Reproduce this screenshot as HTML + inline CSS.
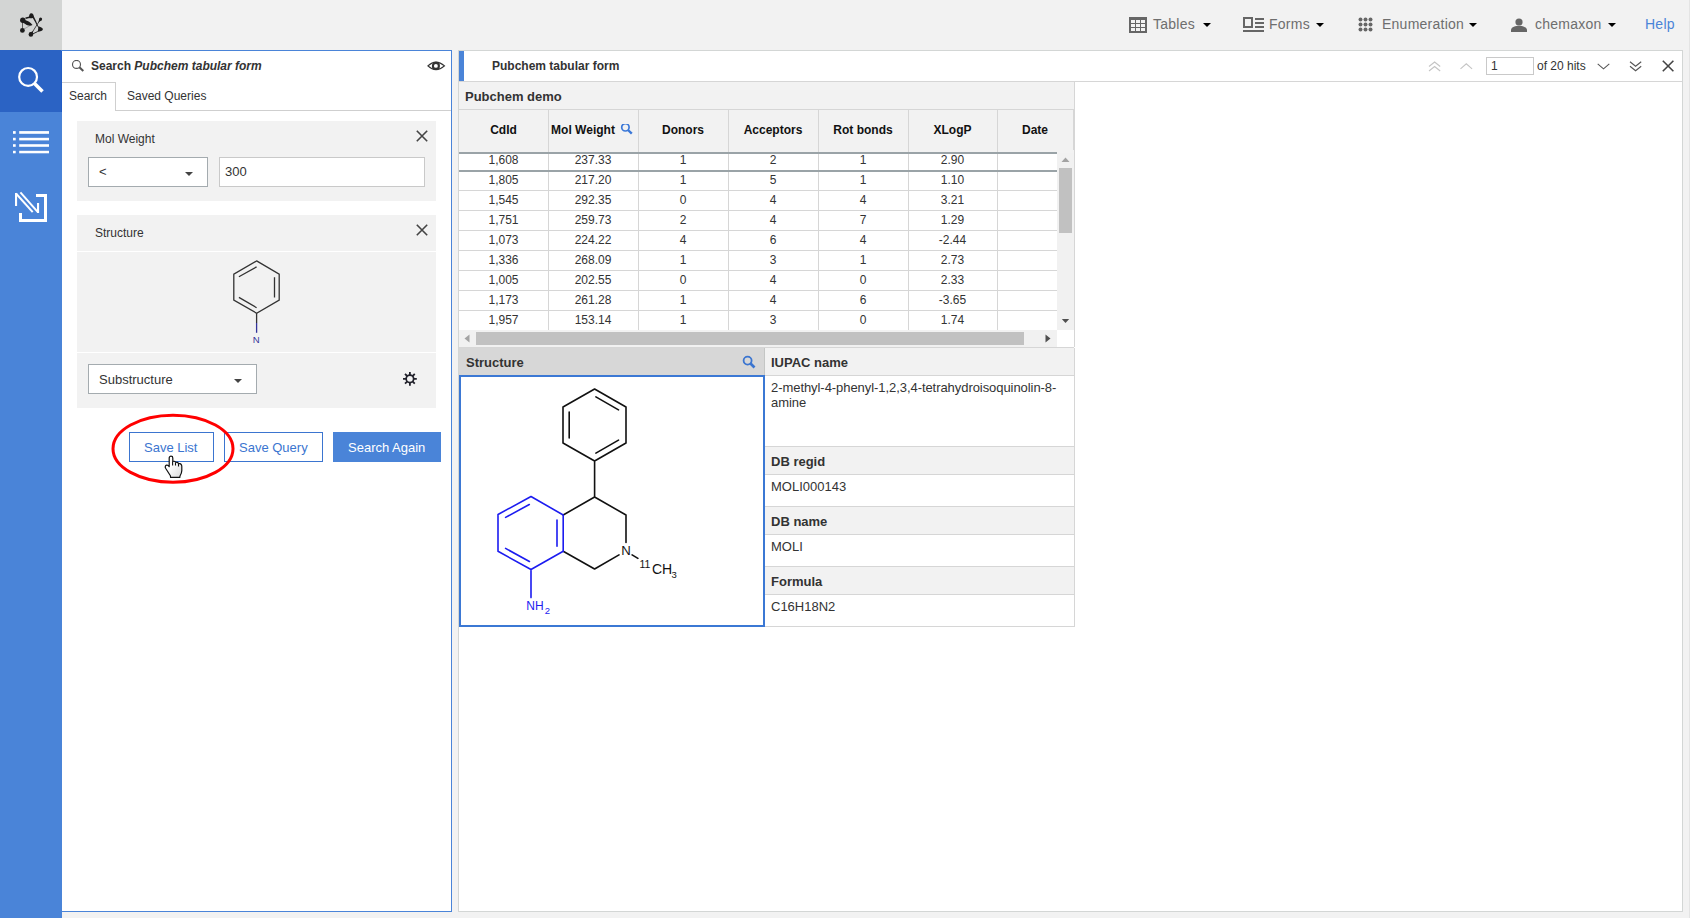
<!DOCTYPE html>
<html><head><meta charset="utf-8">
<style>
*{margin:0;padding:0;box-sizing:border-box}
html,body{width:1690px;height:918px;overflow:hidden;background:#f2f2f2;font-family:"Liberation Sans",sans-serif;color:#333;position:relative}
.a{position:absolute}
.t{position:absolute;white-space:nowrap;line-height:1}
.s12{font-size:12px}.s13{font-size:13px}.s14{font-size:14px;letter-spacing:0.25px}
.b{font-weight:bold}
.hl{position:absolute;height:1px;background:#d3d3d3}
.vl{position:absolute;width:1px;background:#d3d3d3}
</style></head><body>

<!-- logo box -->
<div class="a" style="left:0;top:0;width:62px;height:50px;background:#d3d5d4"></div>
<svg class="a" style="left:18px;top:10px" width="28" height="30" viewBox="18 10 28 30">
 <g fill="#1c1c1c" stroke="none">
  <path d="M29 18 C28.8 15.2 29.8 13.2 31.3 13.2 C32.9 13.2 34 15.2 34.1 17.5 C33 18.3 30.6 18.5 29 18Z"/>
  <path d="M32.2 17 L34.1 17 C35.6 20 37 23.2 38.3 26.4 L37.6 26.7 C36 23.2 34 20 32.2 17Z"/>
  <path d="M25.3 17.5 L29.3 16.6 L29.6 18.1 L25.7 19.1Z"/>
  <ellipse cx="22.8" cy="20.3" rx="2.7" ry="2.7"/>
  <path d="M24.8 19.9 C27.8 20.4 30.8 22.5 32.5 25.1 C30 26.3 27.2 25.4 25.2 23.9 C24.4 23.3 23.6 22.9 22.8 22.7Z"/>
  <rect x="22.1" y="22.5" width="0.8" height="6" opacity="0.8"/>
  <circle cx="22.4" cy="30.4" r="2.4"/>
  <path d="M29.5 33 L33.3 30.8 L32.6 34.6Z"/>
  <circle cx="30.9" cy="34.4" r="2.3"/>
  <path d="M39.3 18.8 L41.8 20 L38.2 22.8Z"/>
  <circle cx="40.6" cy="19.1" r="1.55"/>
  <path d="M38 26.2 C40.5 26.8 42.9 27.6 42.9 29.3 C42.9 30.9 40.3 31.6 37.4 31.9 C38.3 30 38.4 28 38 26.2Z"/>
 </g>
 <g stroke="#1c1c1c" fill="none">
  <path d="M23.6 29.3 L30 25.6" stroke-width="0.6" opacity="0.45"/>
  <path d="M32.8 31.4 L39 21.6" stroke-width="0.9" opacity="0.85"/>
  <path d="M33 33.8 L37.6 31.6" stroke-width="0.9"/>
 </g>
</svg>

<!-- sidebar -->
<div class="a" style="left:0;top:50px;width:62px;height:868px;background:#4a84d8"></div>
<div class="a" style="left:0;top:50px;width:62px;height:62px;background:#2b63c4"></div>
<svg class="a" style="left:0;top:50px" width="62" height="62">
 <circle cx="28.1" cy="26.9" r="8.9" fill="none" stroke="#fff" stroke-width="2.2"/>
 <path d="M34 33 L42.5 41.5" stroke="#fff" stroke-width="3.6" stroke-linecap="butt"/>
</svg>
<svg class="a" style="left:0;top:112px" width="62" height="62">
 <g fill="#fff">
  <rect x="13" y="19.1" width="2.7" height="2.7"/><rect x="19.2" y="19.1" width="29.8" height="2.7"/>
  <rect x="13" y="25.8" width="2.7" height="2.6"/><rect x="19.2" y="25.8" width="29.8" height="2.6"/>
  <rect x="13" y="32.2" width="2.7" height="2.6"/><rect x="19.2" y="32.2" width="29.8" height="2.6"/>
  <rect x="13" y="38.8" width="2.7" height="2.5"/><rect x="19.2" y="38.8" width="29.8" height="2.5"/>
 </g>
</svg>
<svg class="a" style="left:0;top:174px" width="62" height="62">
 <g fill="#fff">
  <rect x="15" y="19" width="2.1" height="13"/>
  <rect x="37" y="29" width="2.1" height="10"/>
 </g>
 <g fill="none" stroke="#fff">
  <path d="M16 19.5 L32.7 38.1" stroke-width="2"/>
  <path d="M20.4 18.4 L38.1 38.3" stroke-width="2"/>
  <path d="M36 21.5 H45.5 V46.5 H20.5 V39" stroke-width="3"/>
 </g>
</svg>

<!-- top bar menu -->
<svg class="a" style="left:1129px;top:17px" width="18" height="16">
 <rect x="0" y="0" width="18" height="16" fill="#666"/>
 <g fill="#f2f2f2">
  <rect x="2" y="3" width="4" height="3"/><rect x="7" y="3" width="4" height="3"/><rect x="12" y="3" width="4" height="3"/>
  <rect x="2" y="7" width="4" height="3"/><rect x="7" y="7" width="4" height="3"/><rect x="12" y="7" width="4" height="3"/>
  <rect x="2" y="11" width="4" height="3"/><rect x="7" y="11" width="4" height="3"/><rect x="12" y="11" width="4" height="3"/>
 </g>
</svg>
<div class="t s14" style="left:1153px;top:17px;color:#6e6e6e">Tables</div>
<svg class="a" style="left:1203px;top:23px" width="8" height="4"><path d="M0 0H8L4 4Z" fill="#000"/></svg>

<svg class="a" style="left:1243px;top:17px" width="21" height="16">
 <rect x="1" y="1" width="8" height="9" fill="none" stroke="#666" stroke-width="2"/>
 <rect x="12" y="1" width="9" height="2" fill="#666"/>
 <rect x="12" y="5" width="9" height="2" fill="#666"/>
 <rect x="12" y="9" width="9" height="2" fill="#666"/>
 <rect x="0" y="13" width="21" height="2" fill="#666"/>
</svg>
<div class="t s14" style="left:1269px;top:17px;color:#6e6e6e">Forms</div>
<svg class="a" style="left:1316px;top:23px" width="8" height="4"><path d="M0 0H8L4 4Z" fill="#000"/></svg>

<svg class="a" style="left:1358px;top:17px" width="15" height="15">
 <g fill="#666"><circle cx="2.5" cy="2.5" r="2"/><circle cx="7.5" cy="2.5" r="2"/><circle cx="12.5" cy="2.5" r="2"/>
 <circle cx="2.5" cy="7.5" r="2"/><circle cx="7.5" cy="7.5" r="2"/><circle cx="12.5" cy="7.5" r="2"/>
 <circle cx="2.5" cy="12.5" r="2"/><circle cx="7.5" cy="12.5" r="2"/><circle cx="12.5" cy="12.5" r="2"/></g>
</svg>
<div class="t s14" style="left:1382px;top:17px;color:#6e6e6e">Enumeration</div>
<svg class="a" style="left:1469px;top:23px" width="8" height="4"><path d="M0 0H8L4 4Z" fill="#000"/></svg>

<svg class="a" style="left:1511px;top:18px" width="16" height="14">
 <circle cx="8" cy="4" r="3.6" fill="#666"/>
 <path d="M0 14 V12 C0 9 5 7.8 8 7.8 C11 7.8 16 9 16 12 V14Z" fill="#666"/>
</svg>
<div class="t s14" style="left:1535px;top:17px;color:#6e6e6e">chemaxon</div>
<svg class="a" style="left:1608px;top:23px" width="8" height="4"><path d="M0 0H8L4 4Z" fill="#000"/></svg>
<div class="t s14" style="left:1645px;top:17px;color:#4a84d8">Help</div>

<!-- LEFT PANEL -->
<div class="a" style="left:61px;top:50px;width:391px;height:862px;background:#fff;border:1px solid #4a84d8"></div>

<div class="a" style="left:61px;top:51px;width:1px;height:61px;background:#225dc6"></div>
<!-- left panel header -->
<svg class="a" style="left:71px;top:60px" width="14" height="13">
 <circle cx="5.5" cy="4.4" r="4.0" fill="none" stroke="#555" stroke-width="1.15"/>
 <path d="M8.4 7.3 L12.3 11" stroke="#555" stroke-width="2.1"/>
</svg>
<div class="t s12 b" style="left:91px;top:60px;color:#333">Search <i>Pubchem tabular form</i></div>
<svg class="a" style="left:427px;top:60px" width="19" height="12">
 <path d="M0.9 5.9 Q8.9 -1.6 17.5 5.9 Q8.9 13.4 0.9 5.9Z" fill="none" stroke="#333" stroke-width="1.2"/>
 <circle cx="8.9" cy="5.9" r="3" fill="none" stroke="#333" stroke-width="2.1"/>
</svg>
<!-- tabs -->
<div class="hl" style="left:116px;top:110px;width:335px;background:#cfcfcf"></div>
<div class="hl" style="left:62px;top:82px;width:54px;background:#cfcfcf"></div>
<div class="vl" style="left:115px;top:82px;height:29px;background:#cfcfcf"></div>
<div class="t s12" style="left:69px;top:90px;color:#333">Search</div>
<div class="t s12" style="left:127px;top:90px;color:#333">Saved Queries</div>

<!-- card 1 -->
<div class="a" style="left:77px;top:121px;width:359px;height:80px;background:#f2f2f2"></div>
<div class="t s12" style="left:95px;top:133px;color:#333">Mol Weight</div>
<svg class="a" style="left:416px;top:130px" width="12" height="12"><path d="M0.8 0.8 L11.2 11.2 M11.2 0.8 L0.8 11.2" stroke="#444" stroke-width="1.6"/></svg>
<div class="a" style="left:88px;top:157px;width:120px;height:30px;background:#fff;border:1px solid #a4abaf"></div>
<div class="t s13" style="left:99px;top:165px;color:#333">&lt;</div>
<svg class="a" style="left:185px;top:172px" width="8" height="4"><path d="M0 0H8L4 4Z" fill="#444"/></svg>
<div class="a" style="left:219px;top:157px;width:206px;height:30px;background:#fff;border:1px solid #c9c9c9"></div>
<div class="t s13" style="left:225px;top:165px;color:#333">300</div>

<!-- card 2 -->
<div class="a" style="left:77px;top:215px;width:359px;height:193px;background:#f2f2f2"></div>
<div class="a" style="left:77px;top:251px;width:359px;height:1px;background:#fff"></div>
<div class="a" style="left:77px;top:352px;width:359px;height:1px;background:#fff"></div>
<div class="t s12" style="left:95px;top:227px;color:#333">Structure</div>
<svg class="a" style="left:416px;top:224px" width="12" height="12"><path d="M0.8 0.8 L11.2 11.2 M11.2 0.8 L0.8 11.2" stroke="#444" stroke-width="1.6"/></svg>
<svg class="a" style="left:220px;top:255px" width="80" height="95" viewBox="220 255 80 95">
 <g fill="none" stroke="#333" stroke-width="1.3">
  <path d="M256.6 260.9 L279.2 274.2 L279.2 300.1 L256.6 313.2 L233.8 300.1 L233.8 274.2 Z"/>
  <path d="M238.9 276.7 L256.6 266.9 M274.5 277.2 L274.5 297.4 M238.9 297.4 L256.6 307.7"/>
  <path d="M256.6 313.2 L256.6 323"/>
 </g>
 <path d="M256.6 323 L256.6 332.8" stroke="#33339a" stroke-width="1.3"/>
 <text x="256.2" y="342.9" font-family="Liberation Sans" font-size="9.6" fill="#33339a" text-anchor="middle">N</text>
</svg>
<div class="a" style="left:88px;top:364px;width:169px;height:30px;background:#fff;border:1px solid #a4abaf"></div>
<div class="t s13" style="left:99px;top:373px;color:#333">Substructure</div>
<svg class="a" style="left:234px;top:379px" width="8" height="4"><path d="M0 0H8L4 4Z" fill="#444"/></svg>
<svg class="a" style="left:400px;top:370px" width="20" height="18">
 <circle cx="9.9" cy="8.8" r="3.75" fill="none" stroke="#22222c" stroke-width="1.7"/>
 <path d="M13.50 8.80 L16.80 8.80 M12.45 11.35 L14.78 13.68 M9.90 12.40 L9.90 15.70 M7.35 11.35 L5.02 13.68 M6.30 8.80 L3.00 8.80 M7.35 6.25 L5.02 3.92 M9.90 5.20 L9.90 1.90 M12.45 6.25 L14.78 3.92 " stroke="#22222c" stroke-width="1.8"/>
</svg>

<!-- buttons -->
<div class="a" style="left:129px;top:432px;width:85px;height:30px;border:1px solid #3b75d0;background:#fff"></div>
<div class="t s13" style="left:144px;top:441px;color:#3b75d0">Save List</div>
<div class="a" style="left:224px;top:432px;width:99px;height:30px;border:1px solid #3b75d0;background:#fff"></div>
<div class="t s13" style="left:239px;top:441px;color:#3b75d0">Save Query</div>
<div class="a" style="left:333px;top:432px;width:108px;height:30px;background:#4a84d8"></div>
<div class="t s13" style="left:348px;top:441px;color:#fff">Search Again</div>
<svg class="a" style="left:100px;top:405px" width="150" height="90">
 <ellipse cx="73" cy="43.7" rx="60" ry="33.5" fill="none" stroke="#f00" stroke-width="3"/>
</svg>


<!-- RIGHT PANEL -->
<div class="a" style="left:458px;top:50px;width:1225px;height:862px;background:#fff;border:1px solid #d3d6d5"></div>


<!-- right panel header -->
<div class="a" style="left:459px;top:51px;width:5px;height:30px;background:#4a84d8"></div>
<div class="hl" style="left:459px;top:81px;width:1223px;background:#d6d6d6"></div>
<div class="t s12 b" style="left:492px;top:60px;color:#333">Pubchem tabular form</div>
<!-- pager -->
<svg class="a" style="left:1426px;top:58px" width="260" height="20" viewBox="1426 58 260 20">
 <g fill="none" stroke="#c4c4c4" stroke-width="1.1">
  <path d="M1429 66.5 L1434.6 62 L1440.2 66.5 M1429 71 L1434.6 66.5 L1440.2 71"/>
  <path d="M1460.5 68.8 L1466.3 63.8 L1472.1 68.8"/>
 </g>
 <g fill="none" stroke="#555" stroke-width="1.1">
  <path d="M1597.7 63.8 L1603.5 68.8 L1609.3 63.8"/>
  <path d="M1630 61.8 L1635.6 66.3 L1641.2 61.8 M1630 66.3 L1635.6 70.8 L1641.2 66.3"/>
 </g>
 <path d="M1662.8 60.8 L1673.4 71.2 M1673.4 60.8 L1662.8 71.2" stroke="#444" stroke-width="1.6"/>
</svg>
<div class="a" style="left:1486px;top:57px;width:48px;height:18px;background:#fff;border:1px solid #c9c9c9"></div>
<div class="t s12" style="left:1491px;top:60px;color:#333">1</div>
<div class="t s12" style="left:1537px;top:60px;color:#333">of 20 hits</div>

<!-- table block -->
<div class="a" style="left:459px;top:82px;width:615px;height:71px;background:#f2f2f2"></div>
<div class="hl" style="left:459px;top:109px;width:615px;background:#d6d6d6"></div>
<div class="vl" style="left:1074px;top:82px;height:265px;background:#d6d6d6"></div><div class="vl" style="left:1073px;top:110px;height:40px;background:#d6d6d6"></div>
<div class="t s13 b" style="left:465px;top:90px;color:#333">Pubchem demo</div>

<div class="vl" style="left:548px;top:110px;height:220px;background:#d6d6d6"></div>
<div class="vl" style="left:638px;top:110px;height:220px;background:#d6d6d6"></div>
<div class="vl" style="left:728px;top:110px;height:220px;background:#d6d6d6"></div>
<div class="vl" style="left:818px;top:110px;height:220px;background:#d6d6d6"></div>
<div class="vl" style="left:908px;top:110px;height:220px;background:#d6d6d6"></div>
<div class="vl" style="left:997px;top:110px;height:220px;background:#d6d6d6"></div>
<div class="t s12 b" style="left:459px;width:89px;text-align:center;top:124px;color:#111">CdId</div>
<div class="t s12 b" style="left:547px;width:72px;text-align:center;top:124px;color:#111">Mol Weight</div>
<div class="t s12 b" style="left:638px;width:90px;text-align:center;top:124px;color:#111">Donors</div>
<div class="t s12 b" style="left:728px;width:90px;text-align:center;top:124px;color:#111">Acceptors</div>
<div class="t s12 b" style="left:818px;width:90px;text-align:center;top:124px;color:#111">Rot bonds</div>
<div class="t s12 b" style="left:908px;width:89px;text-align:center;top:124px;color:#111">XLogP</div>
<div class="t s12 b" style="left:997px;width:76px;text-align:center;top:124px;color:#111">Date</div>
<svg class="a" style="left:620px;top:124px" width="14" height="12">
 <circle cx="5.4" cy="3.3" r="3.7" fill="none" stroke="#3b78d8" stroke-width="1.7"/>
 <path d="M8 6 L11.8 9.6" stroke="#3b78d8" stroke-width="2.4"/></svg>
<div class="a" style="left:459px;top:152px;width:598px;height:178px;background:#fff"></div>
<div class="vl" style="left:548px;top:110px;height:220px;background:#d6d6d6"></div>
<div class="vl" style="left:638px;top:110px;height:220px;background:#d6d6d6"></div>
<div class="vl" style="left:728px;top:110px;height:220px;background:#d6d6d6"></div>
<div class="vl" style="left:818px;top:110px;height:220px;background:#d6d6d6"></div>
<div class="vl" style="left:908px;top:110px;height:220px;background:#d6d6d6"></div>
<div class="vl" style="left:997px;top:110px;height:220px;background:#d6d6d6"></div>
<div class="hl" style="left:459px;top:190px;width:598px;background:#d6d6d6"></div>
<div class="hl" style="left:459px;top:210px;width:598px;background:#d6d6d6"></div>
<div class="hl" style="left:459px;top:230px;width:598px;background:#d6d6d6"></div>
<div class="hl" style="left:459px;top:250px;width:598px;background:#d6d6d6"></div>
<div class="hl" style="left:459px;top:270px;width:598px;background:#d6d6d6"></div>
<div class="hl" style="left:459px;top:290px;width:598px;background:#d6d6d6"></div>
<div class="hl" style="left:459px;top:310px;width:598px;background:#d6d6d6"></div>
<div class="a" style="left:459px;top:152px;width:598px;height:2px;background:#9aa3a7"></div>
<div class="a" style="left:459px;top:170px;width:598px;height:2px;background:#9aa3a7"></div>
<div class="t s12" style="left:459px;width:89px;text-align:center;top:154px;color:#333">1,608</div>
<div class="t s12" style="left:548px;width:90px;text-align:center;top:154px;color:#333">237.33</div>
<div class="t s12" style="left:638px;width:90px;text-align:center;top:154px;color:#333">1</div>
<div class="t s12" style="left:728px;width:90px;text-align:center;top:154px;color:#333">2</div>
<div class="t s12" style="left:818px;width:90px;text-align:center;top:154px;color:#333">1</div>
<div class="t s12" style="left:908px;width:89px;text-align:center;top:154px;color:#333">2.90</div>
<div class="t s12" style="left:459px;width:89px;text-align:center;top:174px;color:#333">1,805</div>
<div class="t s12" style="left:548px;width:90px;text-align:center;top:174px;color:#333">217.20</div>
<div class="t s12" style="left:638px;width:90px;text-align:center;top:174px;color:#333">1</div>
<div class="t s12" style="left:728px;width:90px;text-align:center;top:174px;color:#333">5</div>
<div class="t s12" style="left:818px;width:90px;text-align:center;top:174px;color:#333">1</div>
<div class="t s12" style="left:908px;width:89px;text-align:center;top:174px;color:#333">1.10</div>
<div class="t s12" style="left:459px;width:89px;text-align:center;top:194px;color:#333">1,545</div>
<div class="t s12" style="left:548px;width:90px;text-align:center;top:194px;color:#333">292.35</div>
<div class="t s12" style="left:638px;width:90px;text-align:center;top:194px;color:#333">0</div>
<div class="t s12" style="left:728px;width:90px;text-align:center;top:194px;color:#333">4</div>
<div class="t s12" style="left:818px;width:90px;text-align:center;top:194px;color:#333">4</div>
<div class="t s12" style="left:908px;width:89px;text-align:center;top:194px;color:#333">3.21</div>
<div class="t s12" style="left:459px;width:89px;text-align:center;top:214px;color:#333">1,751</div>
<div class="t s12" style="left:548px;width:90px;text-align:center;top:214px;color:#333">259.73</div>
<div class="t s12" style="left:638px;width:90px;text-align:center;top:214px;color:#333">2</div>
<div class="t s12" style="left:728px;width:90px;text-align:center;top:214px;color:#333">4</div>
<div class="t s12" style="left:818px;width:90px;text-align:center;top:214px;color:#333">7</div>
<div class="t s12" style="left:908px;width:89px;text-align:center;top:214px;color:#333">1.29</div>
<div class="t s12" style="left:459px;width:89px;text-align:center;top:234px;color:#333">1,073</div>
<div class="t s12" style="left:548px;width:90px;text-align:center;top:234px;color:#333">224.22</div>
<div class="t s12" style="left:638px;width:90px;text-align:center;top:234px;color:#333">4</div>
<div class="t s12" style="left:728px;width:90px;text-align:center;top:234px;color:#333">6</div>
<div class="t s12" style="left:818px;width:90px;text-align:center;top:234px;color:#333">4</div>
<div class="t s12" style="left:908px;width:89px;text-align:center;top:234px;color:#333">-2.44</div>
<div class="t s12" style="left:459px;width:89px;text-align:center;top:254px;color:#333">1,336</div>
<div class="t s12" style="left:548px;width:90px;text-align:center;top:254px;color:#333">268.09</div>
<div class="t s12" style="left:638px;width:90px;text-align:center;top:254px;color:#333">1</div>
<div class="t s12" style="left:728px;width:90px;text-align:center;top:254px;color:#333">3</div>
<div class="t s12" style="left:818px;width:90px;text-align:center;top:254px;color:#333">1</div>
<div class="t s12" style="left:908px;width:89px;text-align:center;top:254px;color:#333">2.73</div>
<div class="t s12" style="left:459px;width:89px;text-align:center;top:274px;color:#333">1,005</div>
<div class="t s12" style="left:548px;width:90px;text-align:center;top:274px;color:#333">202.55</div>
<div class="t s12" style="left:638px;width:90px;text-align:center;top:274px;color:#333">0</div>
<div class="t s12" style="left:728px;width:90px;text-align:center;top:274px;color:#333">4</div>
<div class="t s12" style="left:818px;width:90px;text-align:center;top:274px;color:#333">0</div>
<div class="t s12" style="left:908px;width:89px;text-align:center;top:274px;color:#333">2.33</div>
<div class="t s12" style="left:459px;width:89px;text-align:center;top:294px;color:#333">1,173</div>
<div class="t s12" style="left:548px;width:90px;text-align:center;top:294px;color:#333">261.28</div>
<div class="t s12" style="left:638px;width:90px;text-align:center;top:294px;color:#333">1</div>
<div class="t s12" style="left:728px;width:90px;text-align:center;top:294px;color:#333">4</div>
<div class="t s12" style="left:818px;width:90px;text-align:center;top:294px;color:#333">6</div>
<div class="t s12" style="left:908px;width:89px;text-align:center;top:294px;color:#333">-3.65</div>
<div class="t s12" style="left:459px;width:89px;text-align:center;top:314px;color:#333">1,957</div>
<div class="t s12" style="left:548px;width:90px;text-align:center;top:314px;color:#333">153.14</div>
<div class="t s12" style="left:638px;width:90px;text-align:center;top:314px;color:#333">1</div>
<div class="t s12" style="left:728px;width:90px;text-align:center;top:314px;color:#333">3</div>
<div class="t s12" style="left:818px;width:90px;text-align:center;top:314px;color:#333">0</div>
<div class="t s12" style="left:908px;width:89px;text-align:center;top:314px;color:#333">1.74</div>

<div class="a" style="left:1057px;top:153px;width:17px;height:177px;background:#f1f1f1"></div>
<svg class="a" style="left:1061px;top:157px" width="9" height="6"><path d="M0.5 5H8.5L4.5 0.5Z" fill="#a3a3a3"/></svg>
<div class="a" style="left:1059px;top:168px;width:13px;height:65px;background:#c1c1c1"></div>
<svg class="a" style="left:1061px;top:318px" width="9" height="6"><path d="M0.8 0.9H8.2L4.5 5Z" fill="#505050"/></svg>
<div class="a" style="left:459px;top:330px;width:598px;height:17px;background:#f1f1f1"></div>
<svg class="a" style="left:464px;top:334px" width="6" height="9"><path d="M5.5 0.5V8.5L0.5 4.5Z" fill="#a3a3a3"/></svg>
<div class="a" style="left:476px;top:332px;width:548px;height:13px;background:#c1c1c1"></div>
<svg class="a" style="left:1045px;top:334px" width="6" height="9"><path d="M0.5 0.5V8.5L5.5 4.5Z" fill="#505050"/></svg>
<div class="hl" style="left:459px;top:347px;width:615px;background:#d6d6d6"></div>

<!-- detail area -->
<div class="a" style="left:459px;top:348px;width:305px;height:27px;background:#d7d7d7"></div>
<div class="t s13 b" style="left:466px;top:356px;color:#333">Structure</div>
<svg class="a" style="left:742px;top:355px" width="14" height="14">
 <circle cx="5.6" cy="5.6" r="4" fill="none" stroke="#3b75d0" stroke-width="1.8"/>
 <path d="M8.5 8.5 L12.5 12.5" stroke="#3b75d0" stroke-width="2.6"/></svg>
<div class="a" style="left:459px;top:375px;width:306px;height:252px;border:2px solid #3b78d4;background:#fff"></div>

<!--MOL-->
<svg class="a" style="left:461px;top:377px" width="302" height="248" viewBox="461 377 302 248">
 <g fill="none" stroke-width="1.6" stroke-linecap="round" stroke-linejoin="round">
  <path d="M594.6 389 L626 407 L626 443 L594.6 461 L563 443 L563 407 Z M569.2 412.0 L569.2 438.0 M595.9 396.9 L618.5 409.9 M618.5 440.1 L595.9 453.1 M594.6 461 L594.6 497 L626 515 L626 542.4 M619 554.9 L594.6 569 L563.2 551.3 M563.2 515 L594.6 497 M632.1 554.9 L637.9 558.4" stroke="#111"/>
  <path d="M563.2 515 L531 496.5 L498 514.5 L498 551.3 L531 569.5 L563.2 551.3 Z M529.3 504.5 L505.6 517.4 M505.6 548.4 L529.4 561.5 M557.0 520.1 L557.0 546.2 M531 569.5 L531 597.6" stroke="#1c1cf0"/>
 </g>
 <g font-family="Liberation Sans">
  <text x="621.3" y="555.2" font-size="13.2" fill="#111">N</text>
  <text x="639.4" y="567.8" font-size="10.5" fill="#111">11</text>
  <text x="652" y="573.9" font-size="14" fill="#111">CH</text>
  <text x="671.4" y="577.8" font-size="9.5" fill="#111">3</text>
  <text x="526.3" y="610.3" font-size="12" fill="#1c1cf0">NH</text>
  <text x="544.8" y="614.2" font-size="9.5" fill="#1c1cf0">2</text>
 </g>
</svg>

<!--/MOL-->
<div class="a" style="left:765px;top:348px;width:309px;height:27px;background:#f2f2f2"></div>
<div class="vl" style="left:764px;top:348px;height:27px;background:#c4c6c5"></div>
<div class="hl" style="left:765px;top:375px;width:309px;background:#d6d6d6"></div>
<div class="t s13 b" style="left:771px;top:356px;color:#333">IUPAC name</div>
<div class="a s13" style="left:771px;top:380px;width:300px;line-height:15px;color:#333;letter-spacing:-0.06px">2-methyl-4-phenyl-1,2,3,4-tetrahydroisoquinolin-8-<br>amine</div>

<div class="hl" style="left:765px;top:446px;width:309px;background:#d6d6d6"></div>
<div class="a" style="left:765px;top:447px;width:309px;height:27px;background:#f2f2f2"></div>
<div class="hl" style="left:765px;top:474px;width:309px;background:#d6d6d6"></div>
<div class="t s13 b" style="left:771px;top:455px;color:#333">DB regid</div>
<div class="t s13" style="left:771px;top:480px;color:#333">MOLI000143</div>
<div class="hl" style="left:765px;top:506px;width:309px;background:#d6d6d6"></div>
<div class="a" style="left:765px;top:507px;width:309px;height:27px;background:#f2f2f2"></div>
<div class="hl" style="left:765px;top:534px;width:309px;background:#d6d6d6"></div>
<div class="t s13 b" style="left:771px;top:515px;color:#333">DB name</div>
<div class="t s13" style="left:771px;top:540px;color:#333">MOLI</div>
<div class="hl" style="left:765px;top:566px;width:309px;background:#d6d6d6"></div>
<div class="a" style="left:765px;top:567px;width:309px;height:27px;background:#f2f2f2"></div>
<div class="hl" style="left:765px;top:594px;width:309px;background:#d6d6d6"></div>
<div class="t s13 b" style="left:771px;top:575px;color:#333">Formula</div>
<div class="t s13" style="left:771px;top:600px;color:#333">C16H18N2</div>
<div class="hl" style="left:765px;top:626px;width:310px;background:#d6d6d6"></div>
<div class="vl" style="left:1074px;top:348px;height:279px;background:#d6d6d6"></div>
<svg class="a" style="left:158px;top:450px" width="32" height="32">
 <defs><linearGradient id="hg" x1="0" y1="0" x2="1" y2="1"><stop offset="0.4" stop-color="#fff"/><stop offset="1" stop-color="#d8d8d8"/></linearGradient></defs>
 <path d="M11.2 16.7 L11.2 7.9 C11.2 5.6 14.8 5.6 14.8 7.9 L14.8 11.4 C16 11.1 17.2 11.3 17.6 12.2 C18.8 12.2 20 12.6 20.6 13.4 C22.2 13.4 23.8 14.4 23.8 16.6 L23.8 20.5 C23.8 22.5 23 24.5 22 26 L21.8 27.4 L12.6 27.4 L12.4 25.8 L7.6 18.2 C6.9 17 7.2 15.5 8.6 15.2 C9.6 15 10.6 15.7 11.2 16.7 Z" fill="url(#hg)" stroke="#111" stroke-width="1.2" stroke-linejoin="round"/>
 <path d="M14.6 11.5 V15.6 M17.5 12.4 V15.4 M20.5 13.5 V16.6" stroke="#111" stroke-width="1.1"/>
</svg>
<div class="a" style="left:1689px;top:0;width:1px;height:918px;background:#e4e4e4"></div>
</body></html>
